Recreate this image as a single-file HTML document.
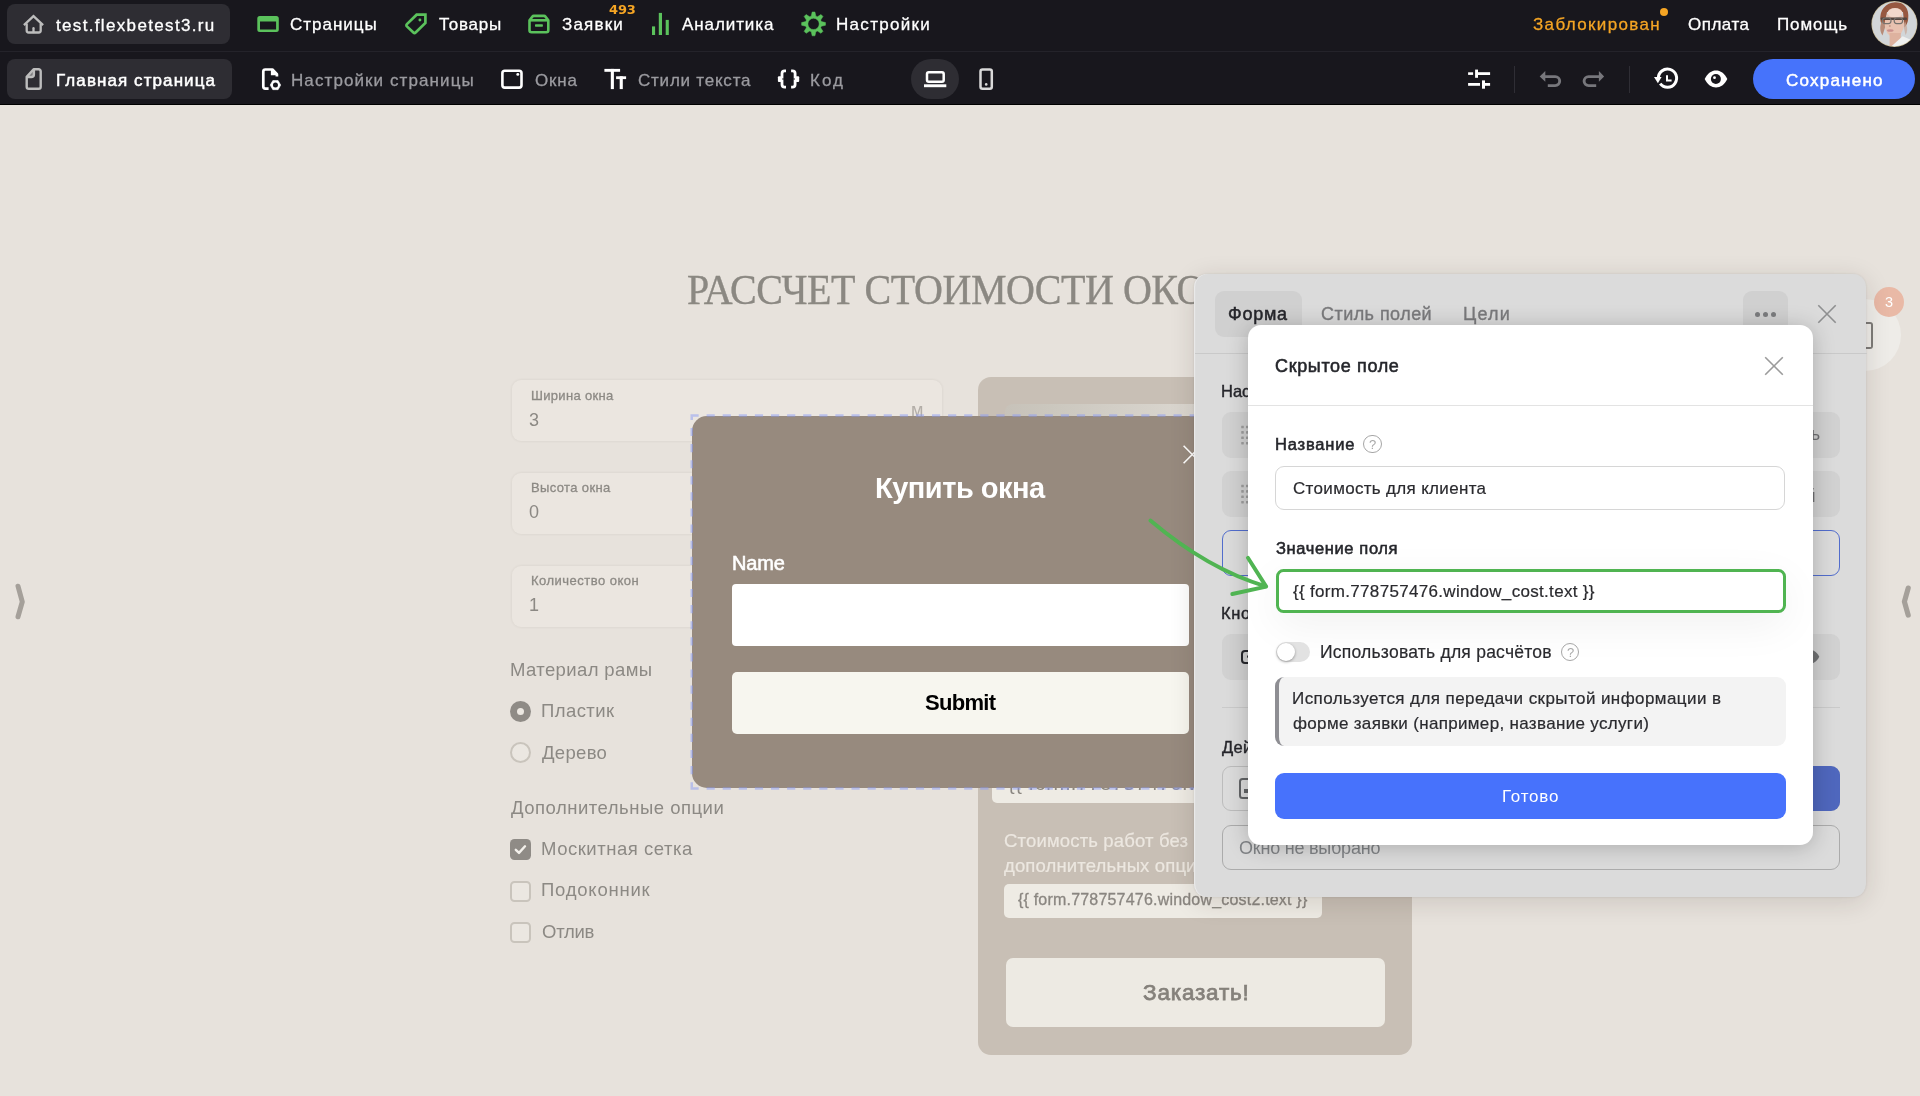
<!DOCTYPE html>
<html lang="ru">
<head>
<meta charset="utf-8">
<title>Редактор — Главная страница</title>
<style>
*{box-sizing:border-box;margin:0;padding:0}
html,body{width:1920px;height:1096px;overflow:hidden}
body{background:#e7e2dc;position:relative;font-family:"Liberation Sans",sans-serif}
.a{position:absolute}
.t{position:absolute;white-space:pre;display:block}
.layer{position:absolute;left:0;top:0;width:1920px;height:1096px;overflow:hidden;will-change:transform}
.t{will-change:transform}
svg{position:absolute;overflow:visible}
/* nav */
#nav{position:absolute;left:0;top:0;width:1920px;height:104.5px;background:#18171d;border-bottom:1.5px solid #000;z-index:50}
.pill{position:absolute;background:#2e2d33;border-radius:8px}
/* canvas */
.fld{position:absolute;left:512px;width:430px;height:61px;border-radius:9px;background:#ebe6e0;box-shadow:0 0 3px rgba(60,40,20,.09)}
.rad{position:absolute;width:21px;height:21px;border-radius:50%}
.chk{position:absolute;left:510.2px;width:21px;height:21px;border-radius:4.5px}
.off{border:2px solid #c9c4bc;background:#ebe7e1}
.on{background:#8f8b86}
.row{position:absolute;left:1221.5px;width:618px;height:45.5px;border-radius:9px;background:#d1d1d1}
</style>
</head>
<body>

<!-- ================= CANVAS ================= -->
<div class="layer" id="canvas">
  <div class="fld" style="top:380px"></div>
  <div class="fld" style="top:473px"></div>
  <div class="fld" style="top:565.5px"></div>

  <div class="rad on" style="left:509.9px;top:700.8px"><i class="a" style="left:7px;top:7px;width:7px;height:7px;border-radius:50%;background:#ece8e2"></i></div>
  <div class="rad off" style="left:509.9px;top:742px"></div>
  <div class="chk on" style="top:839.2px"><svg width="21" height="21" viewBox="0 0 21 21" style="left:0;top:0"><path d="M5.8 10.8l3.2 3.1 6-6.6" fill="none" stroke="#f3f0eb" stroke-width="2.4" stroke-linecap="round" stroke-linejoin="round"/></svg></div>
  <div class="chk off" style="top:880.8px"></div>
  <div class="chk off" style="top:922.4px"></div>

  <!-- calc card -->
  <div class="a" style="left:977.5px;top:377.3px;width:434px;height:678.2px;border-radius:13px;background:#c8bfb5"></div>
  <div class="a" style="left:1005px;top:404px;width:380px;height:250px;border-radius:8px;background:linear-gradient(90deg,#c7c2b9 0%,#cbc7be 12%,#d2cec6 28%,#dbd7d0 50%,#d6d2ca 100%)"></div>
  <div class="a" style="left:992px;top:752px;width:405px;height:51.2px;border-radius:5px;background:#eeebe4"></div>
  <div class="a" style="left:1004.4px;top:884px;width:317.2px;height:33.8px;border-radius:5px;background:#eeebe4"></div>
  <div class="a" style="left:1005.5px;top:958px;width:379.4px;height:69.4px;border-radius:7px;background:#edeae3"></div>

  <!-- cart circle + badge -->
  <div class="a" style="left:1829px;top:299px;width:72px;height:72px;border-radius:50%;background:#eeece8"></div>
  <div class="a" style="left:1857.5px;top:322.4px;width:15.3px;height:26.2px;border:2.7px solid #7d7b78;border-left:none;border-radius:0 3px 3px 0"></div>
  <div class="a" style="left:1874px;top:287px;width:30px;height:30px;border-radius:50%;background:#e9b9a6"></div>

  <!-- side handles -->
  <svg width="40" height="60" viewBox="0 0 40 60" style="left:0;top:570px"><path d="M18 16.2L22.3 31.8L18 46.8" fill="none" stroke="#a5a09a" stroke-width="5" stroke-linecap="round" stroke-linejoin="round"/></svg>
  <svg width="40" height="60" viewBox="0 0 40 60" style="left:1880px;top:570px"><path d="M28.2 18.1L24.4 31.6L28.2 45.1" fill="none" stroke="#a5a09a" stroke-width="5.2" stroke-linecap="round" stroke-linejoin="round"/></svg>
<span class="t" style="left:686.50px;top:270.70px;font:400 40px/40px 'Liberation Serif',serif;color:#8b8882;letter-spacing:-0.477px;-webkit-text-stroke:0.35px #8b8882;transform:scaleY(1.055);transform-origin:0 83.75%;">РАССЧЕТ СТОИМОСТИ ОКОН</span>
<span class="t" style="left:530.50px;top:388.60px;font:400 13px/13px 'Liberation Sans',sans-serif;color:#8c8984;letter-spacing:0.321px;-webkit-text-stroke:0.3px #8c8984;">Ширина окна</span>
<span class="t" style="left:529.00px;top:410.76px;font:400 18px/18px 'Liberation Sans',sans-serif;color:#8c8984;letter-spacing:0.000px;">3</span>
<span class="t" style="left:911.00px;top:401.26px;font:400 18px/18px 'Liberation Sans',sans-serif;color:#b3aea8;letter-spacing:0.000px;">м</span>
<span class="t" style="left:530.50px;top:481.20px;font:400 13px/13px 'Liberation Sans',sans-serif;color:#8c8984;letter-spacing:0.365px;-webkit-text-stroke:0.3px #8c8984;">Высота окна</span>
<span class="t" style="left:529.00px;top:503.36px;font:400 18px/18px 'Liberation Sans',sans-serif;color:#8c8984;letter-spacing:0.000px;">0</span>
<span class="t" style="left:530.50px;top:573.80px;font:400 13px/13px 'Liberation Sans',sans-serif;color:#8c8984;letter-spacing:0.485px;-webkit-text-stroke:0.3px #8c8984;">Количество окон</span>
<span class="t" style="left:529.00px;top:595.96px;font:400 18px/18px 'Liberation Sans',sans-serif;color:#8c8984;letter-spacing:0.000px;">1</span>
<span class="t" style="left:509.50px;top:660.84px;font:400 18.5px/18.5px 'Liberation Sans',sans-serif;color:#8c8984;letter-spacing:0.384px;">Материал рамы</span>
<span class="t" style="left:541.40px;top:701.74px;font:400 18.5px/18.5px 'Liberation Sans',sans-serif;color:#8c8984;letter-spacing:0.427px;">Пластик</span>
<span class="t" style="left:542.40px;top:743.54px;font:400 18.5px/18.5px 'Liberation Sans',sans-serif;color:#8c8984;letter-spacing:0.317px;">Дерево</span>
<span class="t" style="left:510.50px;top:799.04px;font:400 18.5px/18.5px 'Liberation Sans',sans-serif;color:#8c8984;letter-spacing:0.504px;">Дополнительные опции</span>
<span class="t" style="left:541.40px;top:839.94px;font:400 18.5px/18.5px 'Liberation Sans',sans-serif;color:#8c8984;letter-spacing:0.527px;">Москитная сетка</span>
<span class="t" style="left:541.40px;top:881.44px;font:400 18.5px/18.5px 'Liberation Sans',sans-serif;color:#8c8984;letter-spacing:0.776px;">Подоконник</span>
<span class="t" style="left:542.40px;top:923.24px;font:400 18.5px/18.5px 'Liberation Sans',sans-serif;color:#8c8984;letter-spacing:-0.246px;">Отлив</span>
<span class="t" style="left:1007.50px;top:772.67px;font:400 20px/20px 'Liberation Sans',sans-serif;color:#8a8680;letter-spacing:0.551px;">{{ form.778757476.window_cost.text }}</span>
<span class="t" style="left:1004.40px;top:831.94px;font:400 18.5px/18.5px 'Liberation Sans',sans-serif;color:#ece7e0;letter-spacing:0.161px;-webkit-text-stroke:0.2px #ece7e0;">Стоимость работ без</span>
<span class="t" style="left:1004.40px;top:856.74px;font:400 18.5px/18.5px 'Liberation Sans',sans-serif;color:#ece7e0;letter-spacing:0.145px;-webkit-text-stroke:0.2px #ece7e0;">дополнительных опций</span>
<span class="t" style="left:1017.50px;top:891.96px;font:400 16px/16px 'Liberation Sans',sans-serif;color:#8a8680;letter-spacing:0.196px;-webkit-text-stroke:0.3px #8a8680;">{{ form.778757476.window_cost2.text }}</span>
<span class="t" style="left:1142.60px;top:981.75px;font:400 22.5px/22.5px 'Liberation Sans',sans-serif;color:#85817b;letter-spacing:0.817px;-webkit-text-stroke:0.75px #85817b;">Заказать!</span>
  <span class="t" style="left:1884.9px;top:295px;font:400 14.5px/14.5px 'Liberation Sans',sans-serif;color:#fff">3</span>
</div>

<!-- ================= POPUP ================= -->
<div class="layer" id="popup">
  <div class="a" style="left:692px;top:415.8px;width:537px;height:371.8px;border-radius:15px;background:#978a7e"></div>
  <div class="a" style="left:732.2px;top:583.6px;width:456.8px;height:62px;border-radius:4px;background:#fff"></div>
  <div class="a" style="left:732.2px;top:672.2px;width:456.8px;height:61.7px;border-radius:5px;background:#f7f6ef"></div>
  <svg width="20" height="20" viewBox="0 0 20 20" style="left:1181.7px;top:443.8px"><path d="M1.6 1.8L19 19.2M19 1.8L1.6 19.2" stroke="#fff" stroke-width="1.6" fill="none"/></svg>
  <svg width="1920" height="1096" viewBox="0 0 1920 1096" style="left:0;top:0"><g fill="none" stroke="rgba(138,156,245,.5)" stroke-width="2.5" stroke-dasharray="8.15 7.95"><path d="M690.5 415.55H1232"/><path d="M690.5 788.6H1232"/><path d="M691.75 416.8V787.3" stroke-dashoffset="4.95"/></g></svg>
<span class="t" style="left:874.80px;top:474.25px;font:700 29px/29px 'Liberation Sans',sans-serif;color:#ffffff;letter-spacing:-0.490px;">Купить окна</span>
<span class="t" style="left:732.30px;top:553.27px;font:400 20px/20px 'Liberation Sans',sans-serif;color:#ffffff;letter-spacing:-0.142px;-webkit-text-stroke:0.55px #ffffff;">Name</span>
<span class="t" style="left:924.50px;top:692.38px;font:700 22px/22px 'Liberation Sans',sans-serif;color:#000;letter-spacing:-0.705px;">Submit</span>
</div>

<!-- ================= PANEL ================= -->
<div class="layer" id="panelL">
  <div class="a" id="panel" style="left:1194px;top:273.5px;width:672px;height:623px;border-radius:13px;background:#dbdbdb;box-shadow:0 5px 26px rgba(40,30,20,.14),0 0 3px rgba(0,0,0,.10),inset 1.2px 0 0 rgba(255,255,255,.4)"></div>
  <div class="a" style="left:1214.8px;top:291.3px;width:87.4px;height:45.4px;border-radius:9px;background:#d0d0d0"></div>
  <div class="a" style="left:1743px;top:291.2px;width:45.2px;height:45.4px;border-radius:9px;background:#d0d0d0"></div>
  <i class="a" style="left:1754.8px;top:311.5px;width:5px;height:5px;border-radius:50%;background:#7b7c7e"></i>
  <i class="a" style="left:1762.9px;top:311.5px;width:5px;height:5px;border-radius:50%;background:#7b7c7e"></i>
  <i class="a" style="left:1771px;top:311.5px;width:5px;height:5px;border-radius:50%;background:#7b7c7e"></i>
  <svg width="20" height="20" viewBox="0 0 20 20" style="left:1817.4px;top:304.4px"><path d="M1.3 1.3L18.7 18.7M18.7 1.3L1.3 18.7" stroke="#8e8f90" stroke-width="1.6" fill="none"/></svg>
  <div class="a" style="left:1194.5px;top:353px;width:672px;height:1px;background:#c9c9c9"></div>

  <div class="row" style="top:412.3px"></div>
  <div class="row" style="top:471px"></div>
  <div class="a" style="left:1221.5px;top:530.3px;width:618px;height:45.5px;border-radius:9px;border:1.8px solid #526dcc"></div>
  <div class="row" style="top:634px"></div>
  <div class="a" style="left:1221.5px;top:706.5px;width:618px;height:1px;background:#cacaca"></div>
  <div class="a" style="left:1221.5px;top:766px;width:618px;height:45px;border-radius:9px;border:1px solid #bcbcbc"></div>
  <div class="a" style="left:1780px;top:766px;width:59.5px;height:45px;border-radius:0 9px 9px 0;background:#4f67bd"></div>
  <div class="a" style="left:1221.5px;top:825.3px;width:618px;height:44.7px;border-radius:9px;border:1.2px solid #ababab"></div>
  <!-- drag dots -->
  <svg width="10" height="24" viewBox="0 0 10 24" style="left:1241.1px;top:425px" fill="#9d9d9d"><rect x="0.2" y="0.7" width="2.6" height="2.6" rx=".4"/><rect x="5.0" y="0.7" width="2.6" height="2.6" rx=".4"/><rect x="0.2" y="6.1" width="2.6" height="2.6" rx=".4"/><rect x="5.0" y="6.1" width="2.6" height="2.6" rx=".4"/><rect x="0.2" y="11.5" width="2.6" height="2.6" rx=".4"/><rect x="5.0" y="11.5" width="2.6" height="2.6" rx=".4"/><rect x="0.2" y="16.9" width="2.6" height="2.6" rx=".4"/><rect x="5.0" y="16.9" width="2.6" height="2.6" rx=".4"/></svg>
  <svg width="10" height="24" viewBox="0 0 10 24" style="left:1241.1px;top:484px" fill="#9d9d9d"><rect x="0.2" y="0.7" width="2.6" height="2.6" rx=".4"/><rect x="5.0" y="0.7" width="2.6" height="2.6" rx=".4"/><rect x="0.2" y="6.1" width="2.6" height="2.6" rx=".4"/><rect x="5.0" y="6.1" width="2.6" height="2.6" rx=".4"/><rect x="0.2" y="11.5" width="2.6" height="2.6" rx=".4"/><rect x="5.0" y="11.5" width="2.6" height="2.6" rx=".4"/><rect x="0.2" y="16.9" width="2.6" height="2.6" rx=".4"/><rect x="5.0" y="16.9" width="2.6" height="2.6" rx=".4"/></svg>
  <!-- action icon -->
  <div class="a" style="left:1239.1px;top:778.1px;width:21px;height:20.8px;border:2.6px solid #626466;border-radius:3.5px"></div>
  <div class="a" style="left:1244.3px;top:788.6px;width:6px;height:4.8px;background:#626466"></div>
  <div class="a" style="left:1241.1px;top:650.1px;width:23px;height:13.5px;border:2.7px solid #26272c;border-radius:4px"></div>
  <div class="a" style="left:1246.8px;top:655.4px;width:3px;height:3px;border-radius:50%;background:#26272c"></div>
  <svg width="24" height="18" viewBox="0 0 24 18" style="left:1796px;top:648px"><path d="M.6 8.8C3.6 3.2 7.6 1.6 12 1.6S20.400 3.200 23.300 8.800C20.400 14.400 16.400 16 12 16S3.600 14.400 .6 8.800Z" fill="#707173"/><circle cx="12" cy="8.8" r="3.6" fill="#d0d1d1"/></svg>
<span class="t" style="left:1227.50px;top:305.26px;font:400 18px/18px 'Liberation Sans',sans-serif;color:#26262b;letter-spacing:0.730px;-webkit-text-stroke:0.5px #26262b;">Форма</span>
<span class="t" style="left:1321.30px;top:305.26px;font:400 18px/18px 'Liberation Sans',sans-serif;color:#7a7a7c;letter-spacing:0.454px;-webkit-text-stroke:0.35px #7a7a7c;">Стиль полей</span>
<span class="t" style="left:1463.20px;top:305.26px;font:400 18px/18px 'Liberation Sans',sans-serif;color:#7a7a7c;letter-spacing:1.156px;-webkit-text-stroke:0.35px #7a7a7c;">Цели</span>
<span class="t" style="left:1221.20px;top:383.33px;font:400 16.5px/16.5px 'Liberation Sans',sans-serif;color:#26262b;letter-spacing:-0.017px;-webkit-text-stroke:0.4px #26262b;">Настройки полей</span>
<span class="t" style="left:1221.20px;top:605.23px;font:400 16.5px/16.5px 'Liberation Sans',sans-serif;color:#26262b;letter-spacing:0.677px;-webkit-text-stroke:0.4px #26262b;">Кнопка</span>
<span class="t" style="left:1221.80px;top:739.03px;font:400 16.5px/16.5px 'Liberation Sans',sans-serif;color:#26262b;letter-spacing:0.263px;-webkit-text-stroke:0.4px #26262b;">Действие</span>
<span class="t" style="left:1274.00px;top:648.81px;font:700 17px/17px 'Liberation Sans',sans-serif;color:#26262b;letter-spacing:-0.989px;">Submit</span>
<span class="t" style="left:1261.00px;top:426.39px;font:400 17.5px/17.5px 'Liberation Sans',sans-serif;color:#26262b;letter-spacing:-0.316px;">Name</span>
<span class="t" style="left:1751.00px;top:426.39px;font:400 17.5px/17.5px 'Liberation Sans',sans-serif;color:#6f6f72;letter-spacing:-0.040px;">Подпись</span>
<span class="t" style="left:1262.00px;top:487.39px;font:400 17.5px/17.5px 'Liberation Sans',sans-serif;color:#26262b;letter-spacing:-0.114px;">Стоимость для клиента</span>
<span class="t" style="left:1744.00px;top:486.12px;font:400 19px/19px 'Liberation Sans',sans-serif;color:#6f6f72;letter-spacing:-1.269px;">Скрытый</span>
<span class="t" style="left:1470.00px;top:544.19px;font:400 17.5px/17.5px 'Liberation Sans',sans-serif;color:#4a5fc0;letter-spacing:-0.020px;">Добавить поле</span>
<span class="t" style="left:1239.10px;top:839.26px;font:400 18px/18px 'Liberation Sans',sans-serif;color:#808386;letter-spacing:-0.225px;">Окно не выбрано</span>
</div>

<!-- ================= MODAL ================= -->
<div class="layer" id="modalL">
  <div class="a" style="left:1248.2px;top:325.3px;width:564.8px;height:520px;border-radius:13px;background:#fff;box-shadow:0 2px 22px rgba(0,0,0,.22)"></div>
  <div class="a" style="left:1248.2px;top:405px;width:564.8px;height:1px;background:#e3e3e3"></div>
  <svg width="20" height="20" viewBox="0 0 20 20" style="left:1763.6px;top:356.2px"><path d="M1.2 1.2L18.8 18.8M18.8 1.2L1.2 18.8" stroke="#9b9b9b" stroke-width="1.6" fill="none"/></svg>
  <i class="a" style="left:1363px;top:434.6px;width:18.6px;height:18.6px;border-radius:50%;border:1.3px solid #a6a6a6"></i>
  <div class="a" style="left:1275.3px;top:465.8px;width:510.2px;height:44.6px;border-radius:9px;border:1.3px solid #d6d6d6;background:#fff"></div>
  <div class="a" style="left:1276px;top:569.2px;width:509.6px;height:44px;border-radius:7.5px;border:3.2px solid #50b451;background:#fff;box-shadow:0 12px 44px rgba(0,0,0,.06)"></div>
  <div class="a" style="left:1275.6px;top:641.6px;width:34.4px;height:20.6px;border-radius:11px;background:#e2e2e2"></div>
  <div class="a" style="left:1276.6px;top:642.7px;width:18.4px;height:18.4px;border-radius:50%;background:#fff;box-shadow:0 1px 3px rgba(0,0,0,.35)"></div>
  <i class="a" style="left:1560.6px;top:642.7px;width:18.6px;height:18.6px;border-radius:50%;border:1.3px solid #a6a6a6"></i>
  <div class="a" style="left:1275.3px;top:676.8px;width:510.3px;height:68.8px;border-radius:9px;background:#f3f3f3;border-left:4px solid #8e8e93"></div>
  <div class="a" style="left:1275px;top:773.2px;width:510.6px;height:45.6px;border-radius:9px;background:#4772fc"></div>
<span class="t" style="left:1275.40px;top:357.46px;font:400 18px/18px 'Liberation Sans',sans-serif;color:#25262b;letter-spacing:0.641px;-webkit-text-stroke:0.55px #25262b;">Скрытое поле</span>
<span class="t" style="left:1274.60px;top:435.93px;font:400 16.5px/16.5px 'Liberation Sans',sans-serif;color:#25262b;letter-spacing:0.820px;-webkit-text-stroke:0.55px #25262b;">Название</span>
<span class="t" style="left:1369.10px;top:437.80px;font:400 13px/13px 'Liberation Sans',sans-serif;color:#a8a8a8;letter-spacing:0.000px;">?</span>
<span class="t" style="left:1293.20px;top:479.91px;font:400 17px/17px 'Liberation Sans',sans-serif;color:#2a2a2e;letter-spacing:0.326px;-webkit-text-stroke:0.2px #2a2a2e;">Стоимость для клиента</span>
<span class="t" style="left:1275.60px;top:540.13px;font:400 16.5px/16.5px 'Liberation Sans',sans-serif;color:#25262b;letter-spacing:0.622px;-webkit-text-stroke:0.55px #25262b;">Значение поля</span>
<span class="t" style="left:1293.20px;top:583.21px;font:400 17px/17px 'Liberation Sans',sans-serif;color:#2a2a2e;letter-spacing:0.315px;-webkit-text-stroke:0.2px #2a2a2e;">{{ form.778757476.window_cost.text }}</span>
<span class="t" style="left:1320.00px;top:643.59px;font:400 17.5px/17.5px 'Liberation Sans',sans-serif;color:#2a2a2e;letter-spacing:0.231px;-webkit-text-stroke:0.2px #2a2a2e;">Использовать для расчётов</span>
<span class="t" style="left:1566.70px;top:645.90px;font:400 13px/13px 'Liberation Sans',sans-serif;color:#a8a8a8;letter-spacing:0.000px;">?</span>
<span class="t" style="left:1292.20px;top:690.21px;font:400 17px/17px 'Liberation Sans',sans-serif;color:#2a2a2e;letter-spacing:0.424px;-webkit-text-stroke:0.2px #2a2a2e;">Используется для передачи скрытой информации в</span>
<span class="t" style="left:1293.20px;top:714.51px;font:400 17px/17px 'Liberation Sans',sans-serif;color:#2a2a2e;letter-spacing:0.330px;-webkit-text-stroke:0.2px #2a2a2e;">форме заявки (например, название услуги)</span>
<span class="t" style="left:1501.50px;top:787.61px;font:400 17px/17px 'Liberation Sans',sans-serif;color:#ffffff;letter-spacing:0.792px;">Готово</span>
</div>

<!-- green arrow -->
<svg width="1920" height="1096" viewBox="0 0 1920 1096" style="left:0;top:0;z-index:40"><g fill="none" stroke="#50b452" stroke-width="3.9" stroke-linecap="round" stroke-linejoin="round"><path d="M1150.4 520.6Q1208.4 569.6 1265.6 586.3"/><path d="M1247.9 557.8L1266.2 586.6L1232.3 594"/></g></svg>

<!-- ================= NAV ================= -->
<div id="nav">
  <div class="pill" style="left:7px;top:4px;width:223px;height:40px"></div>
  <div class="pill" style="left:7px;top:59px;width:225px;height:40px"></div>
  <div class="a" style="left:0;top:51px;width:1920px;height:1px;background:#24232a"></div>
  <div class="pill" style="left:911px;top:59px;width:48px;height:40px;border-radius:20px"></div>
  <div class="a" style="left:1514.3px;top:65.5px;width:1.2px;height:27px;background:#2f2e35"></div>
  <div class="a" style="left:1628.5px;top:65.5px;width:1.2px;height:27px;background:#2f2e35"></div>
  <div class="a" style="left:1753.2px;top:59px;width:161.8px;height:40px;border-radius:20px;background:#4673fb"></div>
  <i class="a" style="left:1660px;top:8px;width:8px;height:8px;border-radius:50%;background:#f5a524"></i>
<!--ICONS:BEGIN-->
<svg width="1920" height="104" viewBox="0 0 1920 104" style="left:0;top:0">
<g fill="none" stroke="#bdbdbd" stroke-width="2.3"><path d="M23.9 25.2L33.5 16.2L43.1 25.2" stroke-linejoin="miter"/><path d="M26.7 23.4V30.5a2 2 0 0 0 2 2H38.7a2 2 0 0 0 2-2V23.4"/><path d="M33.5 28.2V32" stroke-linecap="round"/></g>
<g fill="none" stroke="#bdbdbd" stroke-width="2.4" stroke-linejoin="round"><path d="M26.7 76.9L33.6 69.3H38.6a2.1 2.1 0 0 1 2.1 2.1V86.7a2.1 2.1 0 0 1-2.1 2.1H28.8a2.1 2.1 0 0 1-2.1-2.1Z"/><path d="M33.9 69.6V74.4a2.6 2.6 0 0 1-2.6 2.6H27" fill="#bdbdbd" fill-opacity=".55"/></g>
<path d="M259.8 15.9H276.3a2.5 2.5 0 0 1 2.5 2.5V29.6a2.5 2.5 0 0 1-2.5 2.5H259.8a2.5 2.5 0 0 1-2.5-2.5V18.4a2.5 2.5 0 0 1 2.5-2.5ZM260 21.6V29.5H276.1V21.6Z" fill="#5bc25c" fill-rule="evenodd"/>
<g fill="none" stroke="#5bc25c" stroke-width="2.7" stroke-linejoin="round"><path d="M425.4 14.7H416.6L406.9 24.1a1.6 1.6 0 0 0 0 2.3L413.4 32.5a1.6 1.6 0 0 0 2.2 0L425.4 22.9Z" stroke-linejoin="miter"/></g><circle cx="419.9" cy="20" r="1.45" fill="#5bc25c"/>
<g fill="none" stroke="#5bc25c" stroke-width="2.6" stroke-linejoin="round"><path d="M529.5 20.3L532.4 16.6a1.8 1.8 0 0 1 1.4-.7H544a1.8 1.8 0 0 1 1.4.7L548.3 20.3V30.2a2 2 0 0 1-2 2H531.5a2 2 0 0 1-2-2Z"/><path d="M529.5 20.3H548.3"/></g><rect x="535" y="24.3" width="7.9" height="2.4" rx=".6" fill="#5bc25c"/>
<g fill="#5bc25c"><rect x="652" y="26.4" width="3.1" height="8.6"/><rect x="658.8" y="12.9" width="3.2" height="22.1"/><rect x="665.7" y="19.9" width="3.1" height="15.1"/></g>
<path d="M811.23 16.14 L812.17 11.98 L814.93 11.98 L815.87 16.14 L817.40 16.77 L821.01 14.50 L822.95 16.44 L820.68 20.05 L821.31 21.58 L825.47 22.52 L825.47 25.28 L821.31 26.22 L820.68 27.75 L822.95 31.36 L821.01 33.30 L817.40 31.03 L815.87 31.66 L814.93 35.82 L812.17 35.82 L811.23 31.66 L809.70 31.03 L806.09 33.30 L804.15 31.36 L806.42 27.75 L805.79 26.22 L801.63 25.28 L801.63 22.52 L805.79 21.58 L806.42 20.05 L804.15 16.44 L806.09 14.50 L809.70 16.77Z M807.90 23.90 a5.65 5.65 0 1 0 11.3 0 a5.65 5.65 0 1 0 -11.3 0Z" fill="#5bc25c" fill-rule="evenodd" stroke="#5bc25c" stroke-width=".5" stroke-linejoin="round"/>
<g fill="none" stroke="#fff" stroke-width="2.7"><path d="M268.6 88.6H265.3a2 2 0 0 1-2-2V71.5a2 2 0 0 1 2-2H272.4L276.9 74.2V76.6" stroke-linejoin="round"/></g><path d="M270.9 69V75.2H278.2Z" fill="#fff"/>
<polygon points="280.70,85.10 278.07,89.65 272.82,89.65 270.20,85.10 272.82,80.55 278.07,80.55" fill="#fff" stroke="#fff" stroke-width=".6" stroke-linejoin="round"/><circle cx="275.45" cy="85.1" r="2.5" fill="#18171d"/>
<rect x="502.4" y="70.7" width="19.1" height="16.9" rx="2.4" fill="none" stroke="#fff" stroke-width="2.6"/><circle cx="517.8" cy="74.4" r="1.45" fill="#fff"/>
<g fill="#fff"><rect x="604.4" y="68.9" width="15.7" height="2.9"/><rect x="610.8" y="68.9" width="3.1" height="20.2"/><rect x="616.1" y="76.3" width="10" height="2.8"/><rect x="619.7" y="76.3" width="3.1" height="12.8"/></g>
<g fill="none" stroke="#fff" stroke-width="2.8" stroke-linejoin="round"><path d="M786 70.8H784.7a2.7 2.7 0 0 0-2.7 2.7V84.5a2.7 2.7 0 0 0 2.7 2.7H786"/><path d="M791.1 70.8H792.4a2.7 2.7 0 0 1 2.7 2.7V84.5a2.7 2.7 0 0 1-2.700 2.7H791.1"/></g><rect x="777.900" y="76.2" width="3.6" height="5.700" rx="1" fill="#fff"/><rect x="795.600" y="76.2" width="3.6" height="5.700" rx="1" fill="#fff"/><circle cx="783" cy="79" r=".8" fill="#18171d"/><circle cx="794.1" cy="79" r=".8" fill="#18171d"/>
<rect x="927" y="72.2" width="16.7" height="9.6" rx="1.8" fill="none" stroke="#fff" stroke-width="2.5"/><rect x="924" y="84.3" width="22.3" height="2.9" fill="#fff"/>
<rect x="980.5" y="69.4" width="11.3" height="19.4" rx="2" fill="none" stroke="#d9d9d9" stroke-width="2.5"/><circle cx="986.2" cy="84.4" r="1.3" fill="#d9d9d9"/>
<g fill="#fff"><rect x="1468.1" y="72.3" width="5" height="2.6"/><rect x="1475.1" y="69.6" width="2.9" height="8.2"/><rect x="1478" y="72.2" width="12.1" height="2.8"/><rect x="1468.1" y="83" width="11.9" height="2.8"/><rect x="1482" y="80.4" width="3" height="8.3"/><rect x="1485" y="83" width="5.1" height="2.8"/></g>
<g fill="none" stroke="#77777c" stroke-width="2.9"><path d="M1545 76.6H1555.2a4.5 4.5 0 0 1 0 9H1547.8"/><path d="M1599 76.6H1588.6a4.5 4.5 0 0 0 0 9H1596.2"/></g><path d="M1539.7 76.5L1545.3 71.1V81.8Z" fill="#77777c"/><path d="M1604.1 76.5L1598.9 71.1V81.8Z" fill="#77777c"/>
<g fill="none" stroke="#fff"><path d="M1660.2 83.6A9.1 9.1 0 1 0 1658.4 78.6" stroke-width="3"/><path d="M1667 75.2V80.5H1671.6" stroke-width="2"/></g><path d="M1654 77L1661.6 77L1657.9 83.2Z" fill="#fff"/>
<path d="M1704.7 79C1707.5 73.2 1711.6 70.6 1716 70.6S1724.5 73.2 1727.3 79C1724.5 84.8 1720.4 87.5 1716 87.5S1707.5 84.8 1704.7 79Z" fill="#fff"/><circle cx="1715.9" cy="79" r="5" fill="#18171d"/><circle cx="1714.5" cy="77.7" r="1.4" fill="#fff"/>
<defs><clipPath id="av"><circle cx="1894.4" cy="24" r="22.3"/></clipPath><filter id="bl" x="-10%" y="-10%" width="120%" height="120%"><feGaussianBlur stdDeviation="0.55"/></filter></defs>
<circle cx="1894.4" cy="24" r="23" fill="#cbbd98"/><g clip-path="url(#av)"><g filter="url(#bl)"><rect x="1868" y="-2" width="54" height="54" fill="#d2d6d9"/><path d="M1880.500 21C1879 10 1886 2.500 1895 2.200S1909.500 8 1908.200 19C1907.800 23 1906 26 1904.500 27.500L1903 12H1887L1884.500 26C1882.500 25 1881 23.500 1880.500 21Z" fill="#97593f"/><path d="M1882.500 20C1879.500 26 1879.500 31 1882.500 35.500L1885.500 26Z" fill="#b78b78"/><path d="M1905 21C1908 27 1907.500 32 1905.500 35L1903.500 26Z" fill="#c9a899" opacity=".7"/><ellipse cx="1894.300" cy="23.600" rx="9.700" ry="13.600" fill="#e8c2b0"/><ellipse cx="1895" cy="12.800" rx="7.400" ry="4.800" fill="#f2d9cc"/><path d="M1889.600 33H1900.800V48H1889.600Z" fill="#deb29f"/><path d="M1889 48.500L1902.600 36.200L1916 42V49Z" fill="#eff0f0"/><rect x="1880.600" y="17.400" width="26.400" height="2.500" rx="1" fill="#54463f"/><rect x="1882.600" y="18" width="8.400" height="5.600" rx="2.500" fill="none" stroke="#77736e" stroke-width="1.200"/><rect x="1894.200" y="18" width="8.400" height="5.600" rx="2.500" fill="none" stroke="#77736e" stroke-width="1.200"/><ellipse cx="1890.300" cy="30.500" rx="3.300" ry="1.300" fill="#c98f8d"/><ellipse cx="1889.800" cy="26" rx="1" ry=".8" fill="#b98a7a"/></g></g>
</svg>
<!--ICONS:END-->
<span class="t" style="left:55.70px;top:16.51px;font:400 17px/17px 'Liberation Sans',sans-serif;color:#ffffff;letter-spacing:1.337px;-webkit-text-stroke:0.3px #ffffff;">test.flexbetest3.ru</span>
<span class="t" style="left:290.00px;top:16.41px;font:400 17px/17px 'Liberation Sans',sans-serif;color:#ffffff;letter-spacing:0.987px;-webkit-text-stroke:0.3px #ffffff;">Страницы</span>
<span class="t" style="left:439.00px;top:16.41px;font:400 17px/17px 'Liberation Sans',sans-serif;color:#ffffff;letter-spacing:0.748px;-webkit-text-stroke:0.3px #ffffff;">Товары</span>
<span class="t" style="left:561.70px;top:16.41px;font:400 17px/17px 'Liberation Sans',sans-serif;color:#ffffff;letter-spacing:1.181px;-webkit-text-stroke:0.3px #ffffff;">Заявки</span>
<span class="t" style="left:609.00px;top:3.20px;font:700 13px/13px 'DejaVu Sans','Liberation Sans',sans-serif;color:#f5a524;letter-spacing:-0.145px;">493</span>
<span class="t" style="left:682.00px;top:16.41px;font:400 17px/17px 'Liberation Sans',sans-serif;color:#ffffff;letter-spacing:0.914px;-webkit-text-stroke:0.3px #ffffff;">Аналитика</span>
<span class="t" style="left:836.20px;top:16.41px;font:400 17px/17px 'Liberation Sans',sans-serif;color:#ffffff;letter-spacing:1.305px;-webkit-text-stroke:0.3px #ffffff;">Настройки</span>
<span class="t" style="left:1532.70px;top:16.41px;font:400 17px/17px 'Liberation Sans',sans-serif;color:#f5a524;letter-spacing:1.355px;-webkit-text-stroke:0.3px #f5a524;">Заблокирован</span>
<span class="t" style="left:1687.50px;top:16.41px;font:400 17px/17px 'Liberation Sans',sans-serif;color:#ffffff;letter-spacing:0.495px;-webkit-text-stroke:0.3px #ffffff;">Оплата</span>
<span class="t" style="left:1776.50px;top:16.41px;font:400 17px/17px 'Liberation Sans',sans-serif;color:#ffffff;letter-spacing:0.900px;-webkit-text-stroke:0.3px #ffffff;">Помощь</span>
<span class="t" style="left:55.50px;top:71.61px;font:400 17px/17px 'Liberation Sans',sans-serif;color:#ffffff;letter-spacing:1.084px;-webkit-text-stroke:0.5px #ffffff;">Главная страница</span>
<span class="t" style="left:291.00px;top:71.61px;font:400 17px/17px 'Liberation Sans',sans-serif;color:#9b9ba0;letter-spacing:1.094px;-webkit-text-stroke:0.3px #9b9ba0;">Настройки страницы</span>
<span class="t" style="left:534.50px;top:71.61px;font:400 17px/17px 'Liberation Sans',sans-serif;color:#9b9ba0;letter-spacing:0.817px;-webkit-text-stroke:0.3px #9b9ba0;">Окна</span>
<span class="t" style="left:637.50px;top:71.61px;font:400 17px/17px 'Liberation Sans',sans-serif;color:#9b9ba0;letter-spacing:0.775px;-webkit-text-stroke:0.3px #9b9ba0;">Стили текста</span>
<span class="t" style="left:810.00px;top:71.61px;font:400 17px/17px 'Liberation Sans',sans-serif;color:#9b9ba0;letter-spacing:2.008px;-webkit-text-stroke:0.3px #9b9ba0;">Код</span>
<span class="t" style="left:1785.80px;top:71.61px;font:400 17px/17px 'Liberation Sans',sans-serif;color:#ffffff;letter-spacing:1.227px;-webkit-text-stroke:0.5px #ffffff;">Сохранено</span>
</div>

</body>
</html>
